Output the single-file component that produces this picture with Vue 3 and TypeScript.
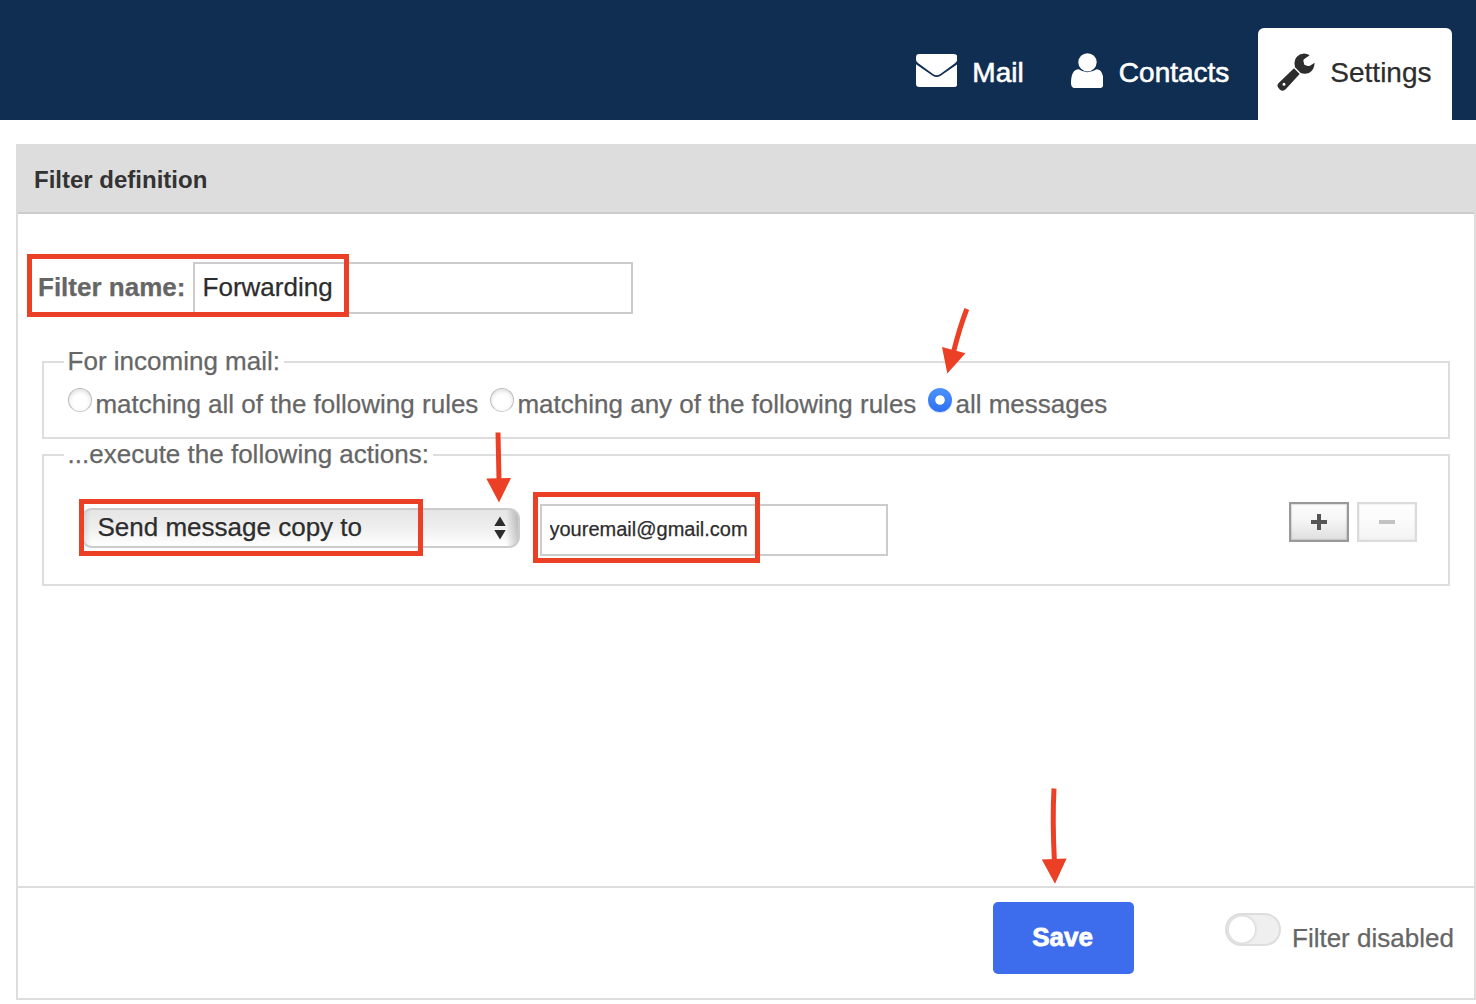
<script setup lang="ts">
import { ref } from 'vue'

interface MatchOption {
  value: string
  label: string
}

const filterName = ref('Forwarding')
const target = ref('youremail@gmail.com')
const scope = ref('any-message')
const enabled = ref(false)

const options: MatchOption[] = [
  { value: 'all', label: 'matching all of the following rules' },
  { value: 'any', label: 'matching any of the following rules' },
  { value: 'any-message', label: 'all messages' },
]
</script>

<template>
  <div class="page">
    <nav class="taskbar">
      <a class="task mail">
        <svg class="icon-mail" viewBox="46 102 124 99" width="41.33" height="33">
          <path d="M56 102H160Q170 102 170 112V119Q169 125 163 130L119 162Q108 170 97 162L53 130Q47 125 46 119V112Q46 102 56 102Z" />
          <path d="M46 133L96 167Q108 175 120 167L170 133V191Q170 201 160 201H56Q46 201 46 191Z" />
        </svg>
        <span>Mail</span>
      </a>
      <a class="task contacts">
        <svg class="icon-user" viewBox="511 98 98 107" width="32.67" height="35.67">
          <circle cx="560.5" cy="126" r="27.5" />
          <path d="M534 147Q547 156 560 156Q574 156 588 147Q609 148 609 189Q609 205 590 205H530Q511 205 511 189Q511 148 534 147Z" />
        </svg>
        <span>Contacts</span>
      </a>
      <a class="task settings">
        <svg class="icon-wrench" viewBox="110 112 116 116" width="38.67" height="38.67">
          <path d="M208 119Q199 113 188 114Q172 116 165 130Q160 142 164 155L181 172Q193 177 206 172Q222 163 223 141L209 150Q206 152 202 151L192 147L189 135Q189 132 192 130Z" />
          <path fill-rule="evenodd" d="M161 158L178 175L136 221Q128 229 119 222L114 216Q108 208 115 202ZM131 201A4.5 4.5 0 1 0 131 210A4.5 4.5 0 1 0 131 201Z" />
        </svg>
        <span>Settings</span>
      </a>
    </nav>

    <main class="panel">
      <h1 class="panel-title">Filter definition</h1>

      <form class="form" @submit.prevent>
        <div class="name-row">
          <label for="filter-name">Filter name:</label>
          <input id="filter-name" v-model="filterName" class="text name-input" type="text" />
          <span class="mark mark-name"></span>
        </div>

        <fieldset class="scope">
          <legend>For incoming mail:</legend>
          <div class="options">
            <label v-for="option in options" :key="option.value" class="option">
              <input v-model="scope" type="radio" name="scope" :value="option.value" />
              <span>{{ option.label }}</span>
            </label>
          </div>
        </fieldset>

        <fieldset class="actions">
          <legend>...execute the following actions:</legend>
          <div class="action-row">
            <div class="select">
              <span>Send message copy to</span>
              <svg viewBox="0 0 12 24" width="12" height="24">
                <path d="M6 0.5L11.7 10H0.3ZM6 23.5L11.7 14H0.3Z" />
              </svg>
              <i class="mark mark-select"></i>
            </div>
            <div class="target">
              <input v-model="target" class="text target-input" type="text" />
              <i class="mark mark-target"></i>
            </div>
            <div class="buttons">
              <button type="button" class="tool" aria-label="Add">
                <svg viewBox="0 0 18 18" width="18" height="18"><path d="M7 1h4v6h6v4h-6v6H7v-6H1V7h6z" /></svg>
              </button>
              <button type="button" class="tool disabled" aria-label="Remove">
                <svg viewBox="0 0 18 18" width="18" height="18"><path d="M1 7h16v4H1z" /></svg>
              </button>
            </div>
          </div>
        </fieldset>
      </form>

      <footer class="footer">
        <button type="button" class="save">Save</button>
        <label class="toggle">
          <input v-model="enabled" type="checkbox" />
          <span>Filter disabled</span>
        </label>
      </footer>
    </main>

    <svg class="arrows" viewBox="0 0 1476 1004" width="1476" height="1004">
      <path class="shaft" d="M966.8 309Q959.5 328 953.5 352" />
      <path d="M942 347L965.5 353.3L947.3 373.5Z" />
      <path class="shaft" d="M498 432.5L499 480" />
      <path d="M486.3 478.5L511 478L499 502.5Z" />
      <path class="shaft" d="M1054 788.5Q1052.3 820 1054.4 861" />
      <path d="M1041.8 859.5L1066.6 858.5L1055 883.8Z" />
    </svg>
  </div>
</template>

<style>
body {
  background: #fff;
}
</style>

<style scoped>
.page {
  position: relative;
  width: 1476px;
  height: 1004px;
  overflow: hidden;
  background: #fff;
  color: #666;
  font: 26px/30px "Liberation Sans", Arial, sans-serif;
  -webkit-text-stroke: 0.25px currentColor;
}

.page * {
  box-sizing: border-box;
}

input,
button {
  margin: 0;
  font-family: inherit;
}

.taskbar {
  display: flex;
  justify-content: flex-end;
  align-items: flex-end;
  height: 120px;
  padding-right: 24px;
  background: #102d52;
}

.task {
  display: flex;
  align-items: flex-start;
  height: 92px;
  color: #fff;
  font-size: 28px;
  line-height: 32px;
}

.task span {
  margin-top: 29px;
}

.task svg {
  flex: none;
  fill: currentColor;
}

.mail {
  width: 154.7px;
}

.icon-mail {
  margin: 26.2px 15.2px 0 0;
}

.contacts {
  width: 187.5px;
}

.icon-user {
  margin: 24.7px 15.7px 0 0;
}

.mail span,
.contacts span {
  -webkit-text-stroke: 0.6px #fff;
}

.settings {
  width: 194px;
  padding-left: 18.7px;
  border-radius: 6px 6px 0 0;
  background: #fff;
  color: #2d2d2d;
}

.icon-wrench {
  margin: 24.5px 15px 0 0;
}

.panel {
  display: flex;
  flex-direction: column;
  height: 856px;
  margin: 24px 0 0 16px;
  border: 2px solid #ddd;
}

.panel-title {
  height: 68px;
  margin: 0;
  padding-left: 16px;
  border-bottom: 2px solid #ccc;
  background: #ddd;
  color: #333;
  font-size: 24px;
  font-weight: bold;
  line-height: 67px;
  -webkit-text-stroke: 0;
}

.form {
  flex: 1;
  padding: 48px 24px 0;
}

.name-row {
  position: relative;
  display: flex;
  align-items: center;
  height: 52px;
  margin-left: -4px;
}

.name-row label {
  width: 155px;
  margin-bottom: 2px;
  font-weight: bold;
}

.text {
  display: block;
  height: 52px;
  border: 2px solid #ccc;
  border-radius: 0;
  outline: 0;
  background: #fff;
  color: #2d2d2d;
}

.name-input {
  width: 440px;
  padding: 0 7.6px 2px;
  font-size: 26px;
}

.mark {
  position: absolute;
  border: 5px solid #ec4026;
  pointer-events: none;
}

.mark-name {
  top: -8px;
  left: -11px;
  width: 322px;
  height: 63px;
}

fieldset {
  min-width: 0;
  margin: 0;
  padding: 0 20px;
  border: 2px solid #ddd;
}

legend {
  height: 30px;
  padding: 0 4.4px 0 3.6px;
  line-height: 28px;
}

.scope {
  height: 92px;
  margin-top: 33px;
}

.options {
  display: flex;
  gap: 11.7px;
  padding: 11px 0 0 4px;
}

.option {
  display: flex;
  gap: 3.4px;
}

.option span {
  margin-top: 1px;
}

.option input {
  appearance: none;
  width: 24px;
  height: 24px;
  border: 1px solid #bcbcbc;
  border-bottom-color: #ccc;
  border-radius: 50%;
  background: #fff;
  box-shadow: inset 0 2px 4px rgba(0, 0, 0, 0.13);
}

.option input:checked {
  border: 0;
  background: radial-gradient(circle, #fff 4.3px, transparent 5.2px), linear-gradient(#4c92f8, #2f71f4);
  box-shadow: 0 1px 1px rgba(47, 113, 244, 0.25);
}

.actions {
  height: 146px;
  margin-top: 1px;
}

.action-row {
  display: flex;
  align-items: flex-start;
  padding: 32px 11px 0 17px;
}

.select {
  position: relative;
  display: flex;
  justify-content: space-between;
  width: 439px;
  height: 40px;
  margin-top: 6px;
  padding: 0 12px 0 14.5px;
  border: 2px solid #ccc;
  border-radius: 11px;
  background:
    linear-gradient(to right, rgba(0, 0, 0, 0.1), transparent 8px calc(100% - 12px), rgba(0, 0, 0, 0.2)),
    linear-gradient(#e5e5e5, #efefef 50%, #fff);
  color: #2d2d2d;
  line-height: 34px;
}

.select svg {
  margin-top: 6px;
  fill: #2d2d2d;
}

.mark-select {
  top: -11px;
  left: -4px;
  width: 344px;
  height: 57px;
}

.target {
  position: relative;
  margin: 2px 0 0 20px;
}

.target-input {
  width: 348px;
  padding: 0 7.5px 2px;
  font-size: 20px;
}

.mark-target {
  top: -12px;
  left: -7px;
  width: 227px;
  height: 71px;
}

.buttons {
  display: flex;
  gap: 8px;
  margin-left: auto;
}

.tool {
  display: grid;
  place-items: center;
  width: 60px;
  height: 40px;
  padding: 0;
  border: 2px solid #999;
  border-radius: 0;
  background: linear-gradient(#fcfcfc, #f7f7f7 40%, #dfdfdf);
  box-shadow: inset 0 0 1px 1px rgba(0, 0, 0, 0.12);
}

.tool svg {
  fill: #555;
}

.tool.disabled {
  opacity: 0.35;
}

.footer {
  display: flex;
  height: 112px;
  padding-left: 975px;
  border-top: 2px solid #ddd;
}

.save {
  width: 141px;
  height: 72px;
  margin-top: 14px;
  padding: 0 2px 2px 0;
  border: 0;
  border-radius: 5px;
  background: #3d6cec;
  color: #fff;
  font-size: 26px;
  font-weight: bold;
  -webkit-text-stroke: 0.8px #fff;
}

.toggle {
  display: flex;
  margin: 25px 0 0 91px;
  white-space: nowrap;
}

.toggle input {
  appearance: none;
  width: 56px;
  height: 33px;
  margin-right: 11px;
  border: 2px solid #ddd;
  border-radius: 17px;
  background: radial-gradient(circle at 15px 14.5px, #fff 12.5px, #dedede 13.5px, #efefef 16px);
}

.toggle span {
  margin-top: 10px;
}

.arrows {
  position: absolute;
  top: 0;
  left: 0;
  fill: #ec4026;
  pointer-events: none;
}

.shaft {
  fill: none;
  stroke: #ec4026;
  stroke-width: 5px;
}
</style>
